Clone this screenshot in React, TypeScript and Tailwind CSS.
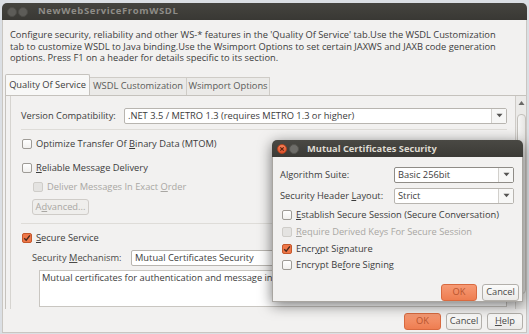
import React from "react";

const font = { fontFamily: '"Open Sans", "Noto Sans", sans-serif' };

function Check({ checked = false, disabled = false }: { checked?: boolean; disabled?: boolean }) {
  if (checked) {
    return (
      <span className="w-[10px] h-[10px] rounded-[2px] border border-[#c4582c] bg-[#ef7748] flex items-center justify-center shrink-0">
        <svg width="8" height="8" viewBox="0 0 8 8">
          <path d="M1.2 4.2 L3.2 6.2 L6.9 1.3" stroke="#4a2a1e" strokeWidth="1.4" fill="none" />
        </svg>
      </span>
    );
  }
  return (
    <span
      className={
        disabled
          ? "w-[10px] h-[10px] rounded-[2px] border border-[#cfcdc9] bg-[#e4e3e1] shrink-0"
          : "w-[10px] h-[10px] rounded-[2px] border border-[#9e9b96] bg-gradient-to-b from-[#ffffff] to-[#f1f0ee] shrink-0"
      }
    />
  );
}

function Arrow() {
  return (
    <svg width="7" height="5" viewBox="0 0 7 5">
      <path d="M0.5 0.8 L6.5 0.8 L3.5 4.3 Z" fill="#555452" />
    </svg>
  );
}

function Select({ text, w, focus = false }: { text: string; w: string; focus?: boolean }) {
  return (
    <div
      className={`${w} h-[16px] flex bg-white rounded-[2px] border ${
        focus ? "border-[#8f8c87]" : "border-[#b8b5b0]"
      }`}
    >
      <div className="flex-1 flex items-center pl-[3px] text-[#3c3c3c] whitespace-nowrap overflow-hidden">{text}</div>
      <div className="w-[15px] flex items-center justify-center border-l border-[#d2d0cc] bg-[#f7f7f6]">
        <Arrow />
      </div>
    </div>
  );
}

function Btn({ label, primary = false, w, u }: { label: string; primary?: boolean; w: string; u?: number }) {
  const cls = primary
    ? "border-[#d86a40] bg-gradient-to-b from-[#f69a74] to-[#ee7d50] text-[#b8552f]"
    : "border-[#b3b0ab] bg-gradient-to-b from-[#fbfbfa] to-[#ebeae8] text-[#4a4a48]";
  return (
    <div className={`${w} h-[17px] rounded-[3px] border flex items-center justify-center ${cls}`}>
      {u !== undefined ? (
        <span>
          {label.slice(0, u)}
          <span className="underline">{label[u]}</span>
          {label.slice(u + 1)}
        </span>
      ) : (
        label
      )}
    </div>
  );
}

function U({ t, i }: { t: string; i: number }) {
  return (
    <>
      {t.slice(0, i)}
      <span className="underline">{t[i]}</span>
      {t.slice(i + 1)}
    </>
  );
}

export default function App() {
  return (
    <div className="w-[529px] h-[334px] bg-[#dbdfe4] relative overflow-hidden text-[9.3px]" style={font}>
      <div className="pt-[3px] px-[2px]">
        {/* main window */}
        <div className="w-[525px] flex flex-col">
          <div className="h-[17px] rounded-t-[5px] bg-gradient-to-b from-[#45443f] to-[#393834] flex items-center pl-[5px]">
            <span className="w-[10px] h-[10px] rounded-full bg-[#5d5c58] border border-[#4d4c48]" />
            <span className="w-[10px] h-[10px] rounded-full bg-[#5d5c58] border border-[#4d4c48] ml-[1px]" />
            <span className="ml-[10px] font-bold text-[#8e8c87] text-[9.5px] tracking-[0.6px]">NewWebServiceFromWSDL</span>
          </div>
          <div className="h-[313px] bg-[#f2f1f0] border-l border-r border-b border-[#c9c6c1] flex flex-col">
            <p className="pt-[9px] pl-[7px] pr-[4px] leading-[11.5px] text-[#3c3c3c] whitespace-nowrap">
              Configure security, reliability and other WS-* features in the 'Quality Of Service' tab.Use the WSDL Customization
              <br />
              tab to customize WSDL to Java binding.Use the Wsimport Options to set certain JAXWS and JAXB code generation
              <br />
              options. Press F1 on a header for details specific to its section.
            </p>
            {/* tabs */}
            <div className="mt-[10px] pl-[2px] flex items-end h-[21px] text-[#3c3c3c] whitespace-nowrap">
              <div className="h-[21px] w-[85px] border border-b-0 border-[#c5c2bd] bg-[#f8f8f7] rounded-t-[2px] flex items-center justify-center">
                Quality Of Service
              </div>
              <div className="h-[18px] w-[97px] border border-l-0 border-b-0 border-[#cfccc7] bg-[#ebeae8] flex items-center justify-center text-[#5a5a58]">
                WSDL Customization
              </div>
              <div className="h-[18px] w-[83px] border border-l-0 border-b-0 border-[#cfccc7] bg-[#ebeae8] flex items-center justify-center text-[#5a5a58]">
                Wsimport Options
              </div>
            </div>
            {/* panel */}
            <div className="ml-[2px] h-[214px] border-t border-l border-[#c5c2bd] flex">
              <div className="ml-[4px] flex-1 border-l border-[#d6d4d0] flex flex-col pl-[10px] pr-[4px] text-[#3c3c3c]">
                <div className="mt-[12px] flex items-center h-[16px]">
                  <span className="w-[103px]">Version Compatibility:</span>
                  <Select w="w-[383px]" text=".NET 3.5 / METRO 1.3 (requires METRO 1.3 or higher)" />
                </div>
                <div className="mt-[5px] h-px w-[486px] bg-[#dedcd8]" />
                <div className="mt-[7px] h-[14px] flex items-center gap-[4px] pl-[1px]">
                  <Check />
                  <span>
                    Optimize Transfer Of <U t="Binary" i={0} /> Data (MTOM)
                  </span>
                </div>
                <div className="mt-[10px] h-[14px] flex items-center gap-[4px] pl-[1px]">
                  <Check />
                  <span>
                    <U t="Reliable" i={0} /> Message Delivery
                  </span>
                </div>
                <div className="mt-[5px] h-[14px] flex items-center gap-[4px] pl-[12px] text-[#a9a7a3]">
                  <Check disabled />
                  <span>
                    Deliver Messages In Exact <U t="Order" i={0} />
                  </span>
                </div>
                <div className="mt-[5px] ml-[11px] w-[57px] h-[16px] rounded-[3px] border border-[#cfccc8] bg-[#efeeec] flex items-center justify-center text-[#a9a7a3]">
                  <span>
                    A<span className="underline">d</span>vanced...
                  </span>
                </div>
                <div className="mt-[8px] h-px w-[486px] bg-[#dedcd8]" />
                <div className="mt-[7px] h-[14px] flex items-center gap-[4px] pl-[1px]">
                  <Check checked />
                  <span>
                    <U t="Secure" i={0} /> Service
                  </span>
                </div>
                <div className="mt-[5px] flex items-center h-[16px] pl-[11px]">
                  <span className="w-[99px] text-[#4a4a48]">
                    Security <U t="Mechanism" i={0} />:
                  </span>
                  <Select w="w-[376px]" text="Mutual Certificates Security" />
                </div>
                <div className="mt-[4px] ml-[18px] w-[468px] h-[37px] bg-white border border-[#c9c6c1] px-[2px] leading-[11px] pt-[1px]">
                  Mutual certificates for authentication and message integrity and confidentiality.
                </div>
              </div>
              {/* scrollbar */}
              <div className="w-[11px] border-l border-[#cfccc8] bg-[#ebeae8] flex flex-col items-center">
                <svg width="7" height="6" viewBox="0 0 7 6" className="mt-[4px]">
                  <path d="M0.5 5 L6.5 5 L3.5 1 Z" fill="#6a6966" />
                </svg>
                <div className="mt-[8px] w-[9px] h-[180px] rounded-[4px] border border-[#c3c0bb] bg-gradient-to-r from-[#f6f6f5] to-[#e6e5e3]" />
              </div>
            </div>
            {/* bottom buttons */}
            <div className="mt-[4px] flex justify-end gap-[5px] pr-[3px]">
              <Btn label="OK" primary w="w-[37px]" />
              <Btn label="Cancel" w="w-[36px]" />
              <Btn label="Help" w="w-[36px]" u={0} />
            </div>
          </div>
        </div>
      </div>

      {/* dialog */}
      <div className="absolute left-[272px] top-[140px] w-[251px] h-[162px] flex flex-col rounded-t-[5px] shadow-[0_3px_14px_rgba(0,0,0,0.55)]">
        <div className="h-[17px] rounded-t-[5px] bg-gradient-to-b from-[#4a4944] to-[#3b3a36] flex items-center pl-[5px]">
          <span className="w-[10px] h-[10px] rounded-full bg-gradient-to-b from-[#f58058] to-[#e0502a] border border-[#b8451f] flex items-center justify-center">
            <svg width="6" height="6" viewBox="0 0 6 6">
              <path d="M1.3 1.3 L4.7 4.7 M4.7 1.3 L1.3 4.7" stroke="#5a2410" strokeWidth="1.1" />
            </svg>
          </span>
          <span className="w-[10px] h-[10px] rounded-full bg-[#6e6d69] border border-[#55544f] ml-[2px]" />
          <span className="ml-[8px] font-bold text-[#dfdbd2] text-[9.3px] tracking-[0px]">Mutual Certificates Security</span>
        </div>
        <div className="flex-1 bg-[#f2f1f0] border-l border-r border-b border-[#a8a5a0] flex flex-col text-[#3c3c3c]">
          <div className="mt-[10px] flex items-center h-[15px] pl-[7px]">
            <span className="w-[114px]">Algorithm Suite:</span>
            <Select w="w-[120px]" text="Basic 256bit" focus />
          </div>
          <div className="mt-[6px] flex items-center h-[15px] pl-[7px]">
            <span className="w-[114px]">
              Security Header <U t="Layout" i={0} />:
            </span>
            <Select w="w-[120px]" text="Strict" />
          </div>
          <div className="mt-[4px] flex flex-col pl-[9px]">
            <div className="h-[16.7px] flex items-center gap-[4px]">
              <Check />
              <span>
                <U t="Establish" i={0} /> Secure Session (Secure Conversation)
              </span>
            </div>
            <div className="h-[16.7px] flex items-center gap-[4px] text-[#a9a7a3]">
              <Check disabled />
              <span>
                <U t="Require" i={0} /> Derived Keys For Secure Session
              </span>
            </div>
            <div className="h-[16.7px] flex items-center gap-[4px]">
              <Check checked />
              <span>
                Encr<span className="underline">y</span>pt Signature
              </span>
            </div>
            <div className="h-[16.7px] flex items-center gap-[4px]">
              <Check />
              <span>
                Encrypt Be<span className="underline">f</span>ore Signing
              </span>
            </div>
          </div>
          <div className="mt-[10px] flex justify-end gap-[5px] pr-[3px]">
            <Btn label="OK" primary w="w-[36px]" />
            <Btn label="Cancel" w="w-[37px]" />
          </div>
        </div>
      </div>
    </div>
  );
}
